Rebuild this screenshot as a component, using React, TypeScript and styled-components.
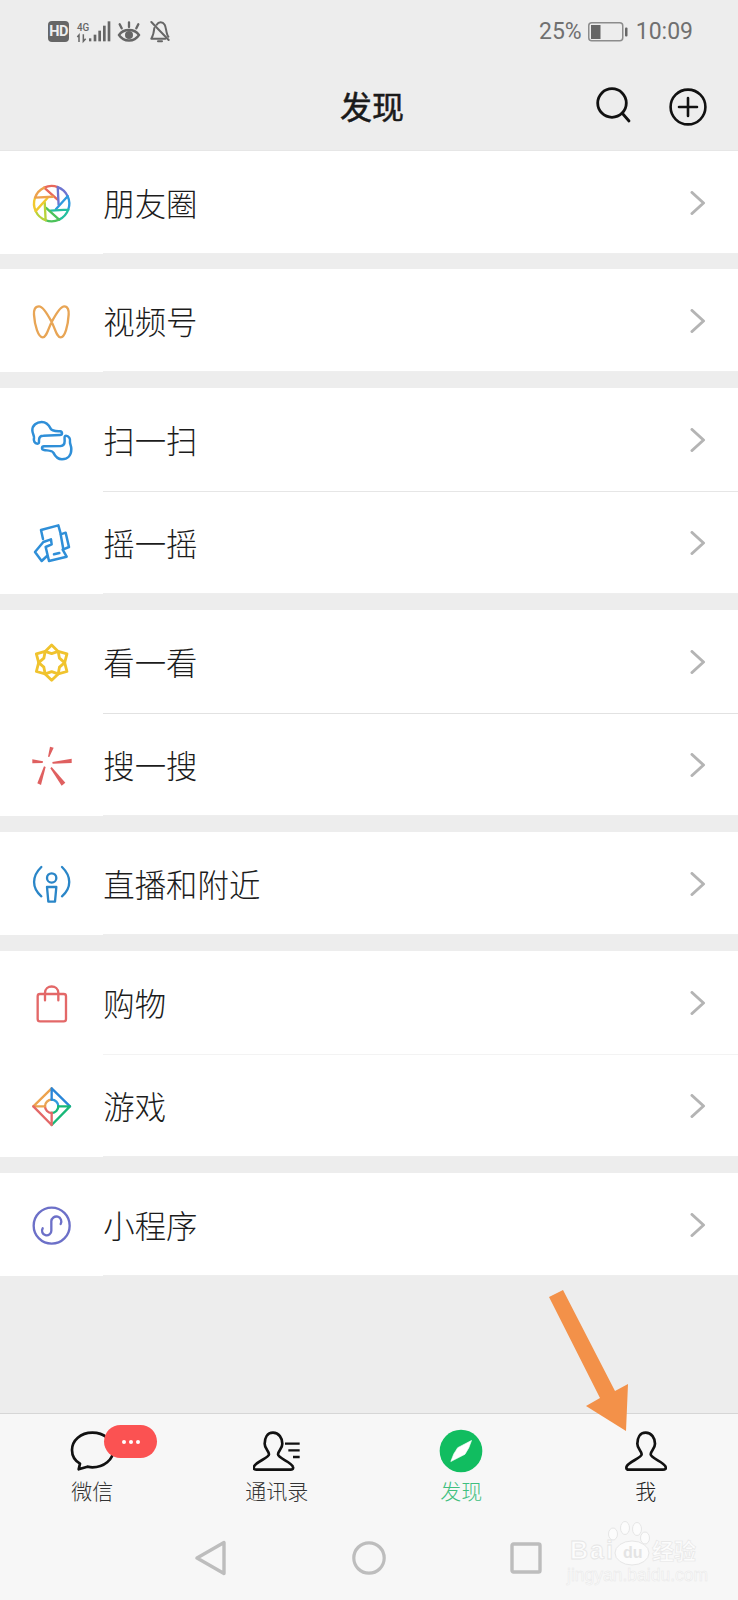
import React from "react";
import styled, { createGlobalStyle } from "styled-components";

const Global = createGlobalStyle`
  html, body { margin: 0; padding: 0; background: #ededed; }
  * { box-sizing: border-box; }
`;

const CJK = `"Noto Sans CJK SC", "Noto Sans", sans-serif`;

const Screen = styled.div`
  position: relative;
  width: 738px;
  height: 1600px;
  overflow: hidden;
  display: flex;
  flex-direction: column;
  background: #ededed;
  font-family: ${CJK};
`;
const StatusBar = styled.div`
  height: 63px;
  padding: 0 45px 0 48px;
  display: flex;
  align-items: center;
  justify-content: space-between;
  color: #666;
`;
const StatusGroup = styled.div`
  display: flex;
  align-items: center;
`;
const HdBadge = styled.span`
  width: 21px;
  height: 21px;
  border-radius: 4px;
  background: #666;
  color: #eee;
  font: 700 14.5px/21px Roboto, sans-serif;
  text-align: center;
  letter-spacing: -0.5px;
`;
const StatusText = styled.span`
  font: 400 23px/1 Roboto, sans-serif;
  color: #707070;
`;
const Toolbar = styled.header`
  height: 87px;
  padding: 0 31px 0 37px;
  display: grid;
  grid-template-columns: minmax(0, 1fr) auto minmax(0, 1fr);
  align-items: center;
`;
const Title = styled.h1`
  grid-column: 2;
  margin: 0;
  padding-bottom: 4px;
  font: 400 32px/1 ${CJK};
  color: #1a1a1a;
  -webkit-text-stroke: 0.5px #1a1a1a;
`;
const ToolActions = styled.div`
  grid-column: 3;
  justify-self: end;
  display: flex;
  align-items: center;
  gap: 35px;
`;
const Groups = styled.main`
  display: flex;
  flex-direction: column;
  gap: 16px;
`;
const Group = styled.section`
  background: #fff;
  &:first-child {
    border-top: 1px solid #e6e6e6;
    margin-bottom: -1px;
  }
`;
const Row = styled.div`
  height: 103px;
  display: flex;
`;
const IconSlot = styled.div`
  width: 103.33px;
  flex: none;
  padding-top: 3px;
  display: flex;
  align-items: center;
  justify-content: center;
`;
const RowBody = styled.div<{ $divider?: string; $last?: boolean }>`
  flex: 1;
  padding: 3px 32px 0 0;
  display: flex;
  align-items: center;
  justify-content: space-between;
  border-top: ${(p) => (p.$divider ? `1px solid ${p.$divider}` : "none")};
  box-shadow: ${(p) => (p.$last ? "inset 0 -1px 0 #eeeeee" : "none")};
`;
const RowLabel = styled.span`
  padding-bottom: 3px;
  font: 300 31.4px/1 ${CJK};
  color: #1c1c1c;
`;
const ChevronWrap = styled.span`
  display: flex;
  margin-bottom: 3px;
`;
const Spacer = styled.div`
  flex: 1;
`;
const BottomArea = styled.footer`
  height: 187px;
  background: #f7f7f7;
  border-top: 1px solid #d6d6d6;
  display: flex;
  flex-direction: column;
`;
const Tabs = styled.nav`
  height: 107px;
  display: grid;
  grid-template-columns: repeat(4, 1fr);
`;
const Tab = styled.div`
  position: relative;
  padding-top: 16px;
  display: flex;
  flex-direction: column;
  align-items: center;
`;
const TabIcon = styled.div`
  height: 42px;
  display: flex;
  align-items: center;
  justify-content: center;
`;
const TabLabel = styled.span<{ $color: string }>`
  margin-top: 6px;
  font: 300 21px/1.2 ${CJK};
  color: ${(p) => p.$color};
`;
const Badge = styled.div`
  position: absolute;
  left: 104px;
  top: 11px;
  width: 53px;
  height: 33px;
  border-radius: 17px;
  background: #fb5252;
  display: flex;
  align-items: center;
  justify-content: center;
  gap: 3px;
`;
const BadgeDot = styled.i`
  width: 4px;
  height: 4px;
  border-radius: 50%;
  background: #fff;
`;
const SystemNav = styled.div`
  flex: 1;
  display: grid;
  grid-template-columns: 1fr auto 1fr;
  align-items: center;
  padding: 0 196px 5px 195px;
`;
const NavCell = styled.div<{ $align: string }>`
  display: flex;
  justify-content: ${(p) => p.$align};
`;
const Arrow = styled.svg`
  position: absolute;
  left: 540px;
  top: 1285px;
`;
const Watermark = styled.div`
  position: absolute;
  left: 564px;
  top: 1516px;
  width: 136px;
  height: 80px;
`;
const Paw = styled.svg`
  position: absolute;
  left: 40px;
  top: 0;
`;
const WmBrand = styled.span`
  position: absolute;
  left: 6px;
  top: 19px;
  font: 700 25px/1.2 "Liberation Sans", sans-serif;
  letter-spacing: 2px;
  color: #fcfcfc;
  -webkit-text-stroke: 0.8px #e6e6e6;
`;
const WmDu = styled.span`
  position: absolute;
  left: 59px;
  top: 29px;
  font: 700 16px/1 "Liberation Sans", sans-serif;
  color: #e4e4e4;
`;
const WmCn = styled.span`
  position: absolute;
  left: 88px;
  top: 18px;
  font: 700 22px/1.4 ${CJK};
  color: #fcfcfc;
  -webkit-text-stroke: 0.6px #e6e6e6;
`;
const WmUrl = styled.span`
  position: absolute;
  left: 3px;
  top: 49px;
  font: 400 17.5px/1.2 "Liberation Sans", sans-serif;
  color: #fbfbfb;
  -webkit-text-stroke: 0.5px #e8e8e8;
  white-space: nowrap;
`;

const Z: React.FC<{ y: number; children: React.ReactNode }> = ({ y, children }) => (
  <svg width="43.33" height="43.33" viewBox={`90 ${y} 130 130`} fill="none" strokeLinecap="round" strokeLinejoin="round">
    {children}
  </svg>
);

const apertureColors = ["#e8685c", "#6d74d0", "#2f9ade", "#25bfa0", "#4cc25a", "#b7d23a", "#f1c92f", "#eda24d"];
const pt = (a: number, r: number, cy = 130) => {
  const t = (a * Math.PI) / 180;
  return `${(155 + r * Math.cos(t)).toFixed(1)} ${(cy + r * Math.sin(t)).toFixed(1)}`;
};
const MomentsIcon = () => (
  <Z y={65}>
    {apertureColors.map((c, i) => {
      const a = -115 + i * 45;
      return (
        <path
          key={c}
          d={`M${pt(a, 53)} A53 53 0 0 1 ${pt(a + 45, 53)} M${pt(a, 53)} L${pt(a + 78, 21)}`}
          stroke={c}
          strokeWidth="7"
        />
      );
    })}
  </Z>
);
const ChannelsIcon = () => (
  <Z y={418}>
    <path
      d="M117 437 C130 437 145 465 155 484 C165 503 170 530 182 530 C195 530 204 495 206 462 C207 450 204 437 193 437 C180 437 165 465 155 484 C145 503 140 530 128 530 C115 530 104 495 102 462 C101 450 104 437 117 437Z"
      stroke="#e8a555"
      strokeWidth="7"
    />
  </Z>
);
const ScanIcon = () => (
  <Z y={56}>
    <g stroke="#2f8fd8" strokeWidth="7.5">
      <path d="M112 130 C104 130 100 122 102 112 C103 105 97 100 97 90 C97 75 110 65 125 65 C140 65 147 75 152 85 C155 92 168 92 180 93 C188 94 188 104 180 104 L130 106 C120 106 117 113 117 120 C117 126 118 130 112 130Z" />
      <path d="M198 106 C206 106 212 116 210 124 C209 131 214 136 214 146 C214 166 202 177 186 177 C172 177 165 167 160 157 C157 150 144 151 132 149 C124 148 124 138 132 138 L182 137 C192 136 194 130 194 122 C194 114 192 106 198 106Z" />
    </g>
  </Z>
);
const ShakeIcon = () => (
  <Z y={363}>
    <g stroke="#2f8fd8" strokeWidth="7.5" transform="translate(75 330)">
      <path d="M54 84 L48 57 L100 43 L107 68" />
      <path d="M107 70 L122 65 L132 108 L115 115 Z" />
      <path d="M113 116 L125 137 L72 150 L62 108 L80 100 L78 85 L55 93 L30 123 L50 150 L66 135" />
      <path d="M87 130 L103 126" />
    </g>
  </Z>
);
const lookCy = 127;
const LookIcon = () => (
  <Z y={62}>
    {[0, 60, 120, 180, 240, 300].map((k) => {
      const a = k - 90;
      return (
        <path
          key={k}
          d={`M${pt(a, 53, lookCy)} L${pt(a + 30, 39, lookCy)} L${pt(a, 27, lookCy)} L${pt(a - 30, 39, lookCy)} Z`}
          stroke="#f0c32e"
          strokeWidth="8.5"
        />
      );
    })}
  </Z>
);
const SearchSparkIcon = () => (
  <Z y={372}>
    <g fill="#df6060">
      <path d="M150 380 L161 383 L148 411 L144 410 Z" />
      <path d="M97 418 L129 424 L128 429 L97 430 Z" />
      <path d="M215 416 L215 429 L158 431 L157 426 Z" />
      <path d="M112 490 L132 439 L137 441 L123 495 Z" />
      <path d="M196 488 L185 497 L151 445 L155 441 Z" />
    </g>
  </Z>
);
const LiveIcon = () => (
  <Z y={730}>
    <g stroke="#2a86c8" strokeWidth="7">
      <path d="M124 742 C95 770 95 805 124 830" />
      <path d="M186 742 C215 770 215 805 186 830" />
      <circle cx="155" cy="775" r="14" />
      <path d="M141 802 H169 L165 846 H145 Z" />
    </g>
  </Z>
);
const ShopIcon = () => (
  <Z y={65}>
    <g stroke="#e36868" strokeWidth="7">
      <rect x="113" y="101" width="85" height="82" rx="7" />
      <path d="M135 120 V98 C135 72 175 72 175 98 V120" />
    </g>
  </Z>
);
const GameIcon = () => (
  <Z y={373}>
    <g strokeWidth="7">
      <path d="M135 437 A20 20 0 0 1 155 417" stroke="#e8a555" />
      <path d="M155 417 A20 20 0 0 1 175 437" stroke="#2f9ade" />
      <path d="M175 437 A20 20 0 0 1 155 457" stroke="#18b878" />
      <path d="M155 457 A20 20 0 0 1 135 437" stroke="#e36868" />
      <path d="M100 437 L155 383 M100 437 H135" stroke="#eda24d" />
      <path d="M155 383 L210 437 M155 383 V417" stroke="#2a86d8" />
      <path d="M210 437 L155 493 M210 437 H175" stroke="#18b878" />
      <path d="M155 493 L100 437 M155 493 V457" stroke="#e36868" />
    </g>
  </Z>
);
const MiniIcon = () => (
  <Z y={730}>
    <g stroke="#6c70c8" strokeWidth="7">
      <circle cx="155" cy="795" r="54" />
      <path d="M128 803 A14 14 0 1 0 154 810 V782 A15 15 0 1 1 182 790" />
    </g>
  </Z>
);

const Chevron = () => (
  <ChevronWrap>
    <svg width="16" height="24" viewBox="0 0 16 24" fill="none">
      <path d="M2 1.5 L13.5 12 L2 22.5" stroke="#b4b4b4" strokeWidth="3" strokeLinecap="round" strokeLinejoin="round" />
    </svg>
  </ChevronWrap>
);

const SignalIcon = () => (
  <svg width="36" height="25" viewBox="225 55 108 75" fill="#666" style={{ margin: "0 0 0 7px" }}>
    <text x="228" y="90" fontFamily="Roboto, sans-serif" fontWeight="500" fontSize="33" textLength="37" lengthAdjust="spacingAndGlyphs">4G</text>
    <path d="M234 124 V103 L229 109 M247 101 V122 L254 114" stroke="#666" strokeWidth="4.5" fill="none" />
    <rect x="264" y="113" width="7" height="9" />
    <rect x="278" y="102" width="8" height="20" />
    <rect x="292" y="90" width="8" height="32" />
    <rect x="306" y="75" width="8" height="47" />
    <rect x="320" y="62" width="8" height="60" />
  </svg>
);
const EyeIcon = () => (
  <svg width="24" height="22" viewBox="352 58 72 66" fill="none" stroke="#666" strokeWidth="7" strokeLinecap="round" style={{ marginLeft: 5 }}>
    <path d="M358 100 C372 80 404 80 418 100 C404 122 372 122 358 100Z" />
    <circle cx="388" cy="100" r="12" fill="#666" stroke="none" />
    <path d="M366 80 L360 68 M388 76 V62 M410 80 L416 68" />
  </svg>
);
const BellOffIcon = () => (
  <svg width="20" height="23" viewBox="448 58 60 69" fill="none" stroke="#666" strokeWidth="6" strokeLinecap="round" strokeLinejoin="round" style={{ marginLeft: 9 }}>
    <path d="M468 72 C474 62 486 62 492 72 C497 80 496 100 503 108 M461 82 C460 92 458 104 452 114 H494" />
    <path d="M452 64 L504 118" />
    <path d="M472 122 H484" />
  </svg>
);
const BatteryIcon = () => (
  <svg width="40" height="20" viewBox="0 0 40 20" fill="none" style={{ margin: "0 8px 0 6px" }}>
    <rect x="0.75" y="0.75" width="34" height="18" rx="3" stroke="#8c8c8c" strokeWidth="1.5" />
    <rect x="3" y="3" width="9.5" height="14" fill="#666" />
    <rect x="37" y="5.5" width="2.5" height="9" rx="1" fill="#666" />
  </svg>
);
const SearchIcon = () => (
  <svg width="40" height="40" viewBox="0 0 40 40" fill="none" stroke="#111" strokeWidth="2.8" strokeLinecap="round" style={{ marginTop: -4 }}>
    <circle cx="18" cy="18" r="14.3" />
    <path d="M28.5 28.5 L35 36" />
  </svg>
);
const PlusCircleIcon = () => (
  <svg width="38" height="38" viewBox="0 0 38 38" fill="none" stroke="#111" strokeWidth="2.6" strokeLinecap="round">
    <circle cx="19" cy="19" r="17.4" />
    <path d="M10 19 H28 M19 10 V28" />
  </svg>
);

const personPath =
  "M60 3 C42 3 35 20 35 36 C35 52 48 58 48 68 C48 80 2 92 2 108 Q2 114 10 114 H112 Q122 114 120 106 C118 92 75 80 75 68 C75 58 88 52 88 36 C88 20 78 3 60 3Z";
const ChatIcon = () => (
  <svg width="45" height="40" viewBox="208 90 135 120" fill="none" stroke="#111" strokeWidth="8" strokeLinejoin="round">
    <path d="M275 95 C240 95 214 118 214 147 C214 165 224 180 238 188 L234 205 L260 197 C265 198 270 199 275 199 C310 199 338 176 338 147 C338 118 310 95 275 95Z" />
  </svg>
);
const ContactsIcon = () => (
  <svg width="48" height="40" viewBox="0 -2 144 120" fill="none" stroke="#111" strokeWidth="8" strokeLinejoin="round">
    <path d={personPath} />
    <path d="M96 36 H140 M106 56 H140 M120 76 H140" strokeWidth="7" />
  </svg>
);
const MeIcon = () => (
  <svg width="42" height="40" viewBox="-2 -2 126 120" fill="none" stroke="#111" strokeWidth="8" strokeLinejoin="round">
    <path d={personPath} />
  </svg>
);
const CompassIcon = () => (
  <svg width="44" height="44" viewBox="209 473 134 134">
    <circle cx="276" cy="540" r="65" fill="#11bd60" />
    <path d="M308 508 L266 530 Q252 548 245 572 L288 550 Q302 530 308 508Z" fill="#fff" stroke="#fff" strokeWidth="2" strokeLinejoin="round" />
  </svg>
);

const rows: { label: string; icon: React.ReactNode; divider?: string }[][] = [
  [{ label: "朋友圈", icon: <MomentsIcon /> }],
  [{ label: "视频号", icon: <ChannelsIcon /> }],
  [
    { label: "扫一扫", icon: <ScanIcon /> },
    { label: "摇一摇", icon: <ShakeIcon />, divider: "#e6e6e6" },
  ],
  [
    { label: "看一看", icon: <LookIcon /> },
    { label: "搜一搜", icon: <SearchSparkIcon />, divider: "#e2e2e2" },
  ],
  [{ label: "直播和附近", icon: <LiveIcon /> }],
  [
    { label: "购物", icon: <ShopIcon /> },
    { label: "游戏", icon: <GameIcon />, divider: "#f3f3f3" },
  ],
  [{ label: "小程序", icon: <MiniIcon /> }],
];

export default function App() {
  return (
    <Screen>
      <Global />
      <StatusBar>
        <StatusGroup>
          <HdBadge>HD</HdBadge>
          <SignalIcon />
          <EyeIcon />
          <BellOffIcon />
        </StatusGroup>
        <StatusGroup>
          <StatusText>25%</StatusText>
          <BatteryIcon />
          <StatusText>10:09</StatusText>
        </StatusGroup>
      </StatusBar>
      <Toolbar>
        <Title>发现</Title>
        <ToolActions>
          <SearchIcon />
          <PlusCircleIcon />
        </ToolActions>
      </Toolbar>
      <Groups>
        {rows.map((group, g) => (
          <Group key={g}>
            {group.map((r, i) => (
              <Row key={r.label}>
                <IconSlot>{r.icon}</IconSlot>
                <RowBody $divider={r.divider} $last={i === group.length - 1}>
                  <RowLabel>{r.label}</RowLabel>
                  <Chevron />
                </RowBody>
              </Row>
            ))}
          </Group>
        ))}
      </Groups>
      <Spacer />
      <BottomArea>
        <Tabs>
          <Tab>
            <TabIcon><ChatIcon /></TabIcon>
            <TabLabel $color="#333">微信</TabLabel>
            <Badge><BadgeDot /><BadgeDot /><BadgeDot /></Badge>
          </Tab>
          <Tab>
            <TabIcon><ContactsIcon /></TabIcon>
            <TabLabel $color="#333">通讯录</TabLabel>
          </Tab>
          <Tab>
            <TabIcon><CompassIcon /></TabIcon>
            <TabLabel $color="#3fbf7f">发现</TabLabel>
          </Tab>
          <Tab>
            <TabIcon><MeIcon /></TabIcon>
            <TabLabel $color="#222">我</TabLabel>
          </Tab>
        </Tabs>
        <SystemNav>
          <NavCell $align="flex-start">
            <svg width="32" height="36" viewBox="0 0 32 36" fill="none" stroke="#bdbdbd" strokeWidth="3.4" strokeLinejoin="round">
              <path d="M2 18 L29 2.5 V33.5 Z" />
            </svg>
          </NavCell>
          <NavCell $align="center">
            <svg width="34" height="34" viewBox="0 0 34 34" fill="none" stroke="#bdbdbd" strokeWidth="3.2">
              <circle cx="17" cy="17" r="15.2" />
            </svg>
          </NavCell>
          <NavCell $align="flex-end">
            <svg width="32" height="32" viewBox="0 0 32 32" fill="none" stroke="#bdbdbd" strokeWidth="3.4" strokeLinejoin="round">
              <rect x="2" y="2" width="28" height="28" rx="1.5" />
            </svg>
          </NavCell>
        </SystemNav>
      </BottomArea>
      <Arrow width="100" height="155" viewBox="540 1285 100 155">
        <path d="M549 1297 L563 1290 L615 1391 L628 1384 L626 1431 L586 1406 L600 1398 Z" fill="#f39149" />
      </Arrow>
      <Watermark>
        <Paw width="50" height="50" viewBox="0 0 50 50" fill="#fcfcfc" stroke="#e6e6e6" strokeWidth="1">
          <ellipse cx="9" cy="18" rx="4.5" ry="6" />
          <ellipse cx="21" cy="12" rx="4.5" ry="6.5" />
          <ellipse cx="33" cy="13" rx="4.5" ry="6.5" />
          <ellipse cx="41" cy="22" rx="4.5" ry="6" />
          <ellipse cx="28" cy="37" rx="17" ry="12" />
        </Paw>
        <WmBrand>Bai</WmBrand>
        <WmDu>du</WmDu>
        <WmCn>经验</WmCn>
        <WmUrl>jingyan.baidu.com</WmUrl>
      </Watermark>
    </Screen>
  );
}
